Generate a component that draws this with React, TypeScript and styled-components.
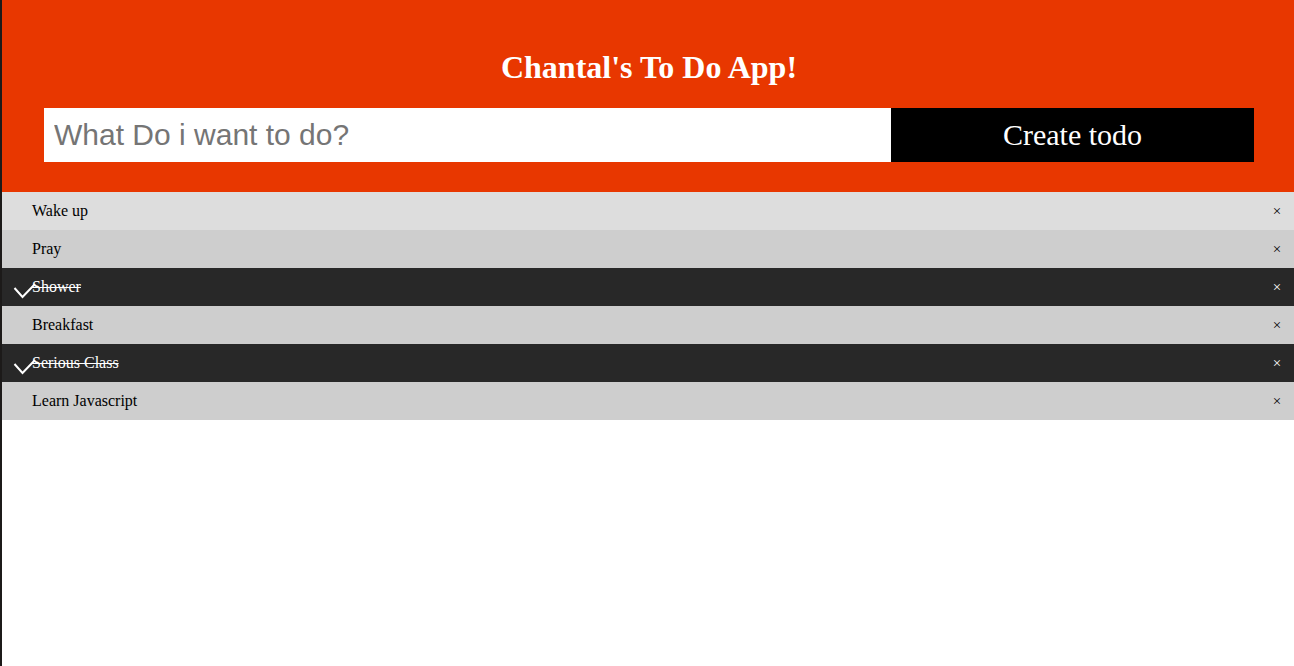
import { createGlobalStyle } from "styled-components";
import styled from "styled-components";

const GlobalStyle = createGlobalStyle`
  html, body {
    margin: 0;
    padding: 0;
    background: #fff;
  }
  * {
    box-sizing: border-box;
  }
`;

const Page = styled.div`
  min-height: 100vh;
  border-left: 2px solid #1c1a19;
  font-family: "Liberation Serif", "Times New Roman", serif;
`;

const Header = styled.header`
  background-color: #e83700;
  padding: 49px 40px 30px 42px;
`;

const Title = styled.h2`
  margin: 0 0 22px;
  color: #fff;
  text-align: center;
  font-size: 32px;
  line-height: 37px;
  font-weight: 700;
`;

const Form = styled.div`
  display: flex;
  height: 54px;
`;

const Input = styled.input`
  width: 70%;
  height: 100%;
  border: none;
  margin: 0;
  padding: 0 10px;
  font-family: "Liberation Sans", Arial, sans-serif;
  font-size: 30px;
  color: #333;
  outline: none;
  &::placeholder {
    color: #757575;
  }
`;

const AddBtn = styled.button`
  width: 30%;
  height: 100%;
  border: none;
  margin: 0;
  padding: 0;
  background: #000;
  color: #fff;
  font-family: "Liberation Serif", "Times New Roman", serif;
  font-size: 30px;
  cursor: pointer;
`;

const List = styled.ul`
  list-style: none;
  margin: 0;
  padding: 0;
`;

const Item = styled.li<{ $checked?: boolean; $hover?: boolean }>`
  position: relative;
  display: flex;
  align-items: center;
  height: 38px;
  padding: 0 0 0 30px;
  font-size: 16px;
  background: ${(p) => (p.$checked ? "#282828" : p.$hover ? "#dddddd" : "#cecece")};
  color: ${(p) => (p.$checked ? "#fff" : "#000")};
  cursor: pointer;
  span.text {
    text-decoration: ${(p) => (p.$checked ? "line-through" : "none")};
  }
`;

const Check = styled.svg`
  position: absolute;
  left: 11px;
  top: 15px;
  width: 24px;
  height: 17px;
`;

const Close = styled.span`
  margin-left: auto;
  width: 34px;
  text-align: center;
  font-size: 15px;
`;

const todos = [
  { text: "Wake up", done: false, hover: true },
  { text: "Pray", done: false },
  { text: "Shower", done: true },
  { text: "Breakfast", done: false },
  { text: "Serious Class", done: true },
  { text: "Learn Javascript", done: false },
];

function App() {
  return (
    <Page>
      <GlobalStyle />
      <Header>
        <Title>Chantal's To Do App!</Title>
        <Form>
          <Input type="text" placeholder="What Do i want to do?" />
          <AddBtn>Create todo</AddBtn>
        </Form>
      </Header>
      <List>
        {todos.map((t) => (
          <Item key={t.text} $checked={t.done} $hover={t.hover}>
            {t.done && (
              <Check viewBox="0 0 24 17">
                <path d="M1.5 5 L9.5 14 L22 1" fill="none" stroke="#fff" strokeWidth="2" />
              </Check>
            )}
            <span className="text">{t.text}</span>
            <Close>×</Close>
          </Item>
        ))}
      </List>
    </Page>
  );
}

export default App;
